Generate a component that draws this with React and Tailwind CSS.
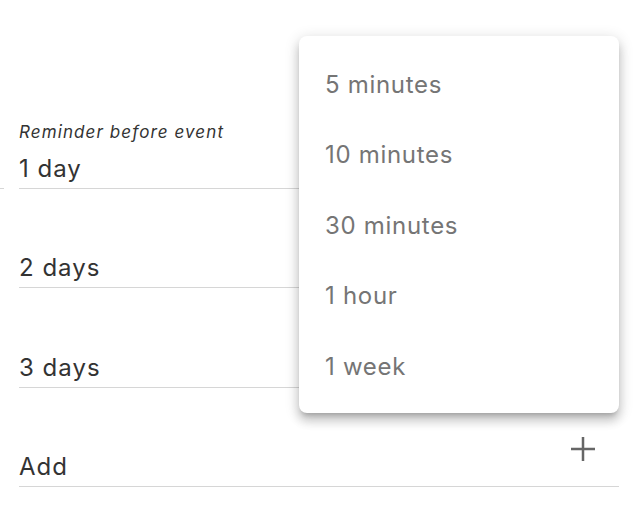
import React from "react";

const options = ["5 minutes", "10 minutes", "30 minutes", "1 hour", "1 week"];

function Row({ label, value, children }) {
  return (
    <div className="h-[99.5px] flex flex-col justify-end border-b border-[#d6d6d6]">
      {label && (
        <div className="text-[17px] leading-[22px] italic tracking-[1.1px] text-[#333] mb-[10px]">{label}</div>
      )}
      <div className="flex items-end justify-between">
        <div className="text-[24px] leading-[32px] tracking-[1px] text-[#333] pb-[3px]">{value}</div>
        {children}
      </div>
    </div>
  );
}

export default function App() {
  return (
    <div
      className="relative w-[640px] h-[511px] bg-white overflow-hidden"
      style={{ fontFamily: "Inter, 'Noto Sans', sans-serif" }}
    >
      <div className="flex pt-[89px]">
        <div className="w-[4px] h-[99.5px] border-b border-[#d6d6d6]" />
        <div className="ml-[15px] w-[600px] flex flex-col">
          <Row label="Reminder before event" value="1 day" />
          <Row value="2 days" />
          <Row value="3 days" />
          <Row value="Add">
            <svg
              width="24"
              height="24"
              viewBox="0 0 24 24"
              className="mr-[24px] mb-[25px]"
              fill="none"
              stroke="#666"
              strokeWidth="2.5"
            >
              <path d="M12 0v24M0 12h24" />
            </svg>
          </Row>
        </div>
      </div>
      <div className="absolute left-[299px] top-[36px] w-[320px] bg-white rounded-lg pt-[13.5px] pb-[10.5px] shadow-[0_5px_5px_-3px_rgba(0,0,0,0.2),0_8px_10px_1px_rgba(0,0,0,0.14),0_3px_14px_2px_rgba(0,0,0,0.12)]">
        {options.map((o) => (
          <div key={o} className="h-[70.5px] flex items-center pl-[26px] text-[24px] tracking-[0.7px] text-[#757575]">
            {o}
          </div>
        ))}
      </div>
    </div>
  );
}
